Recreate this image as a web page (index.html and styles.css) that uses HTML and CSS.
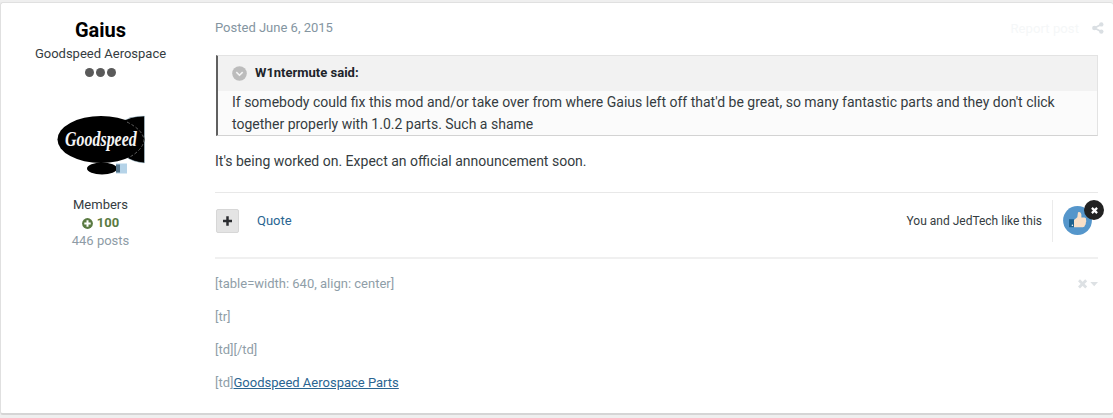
FILE: index.html
```html
<!DOCTYPE html>
<html lang="en">
<head>
<meta charset="utf-8">
<title>Forum post</title>
<link rel="stylesheet" href="styles.css">
</head>
<body>
<article class="post">
  <aside class="author">
    <h3 class="name">Gaius</h3>
    <div class="rank">Goodspeed Aerospace</div>
    <div class="pips"><i></i><i></i><i></i></div>
    <svg class="avatar" width="90" height="90" viewBox="0 0 90 90">
      <defs><filter id="soft" x="-10%" y="-10%" width="120%" height="120%"><feGaussianBlur stdDeviation=".6"/></filter></defs>
      <g filter="url(#soft)">
        <path d="M66 21Q74 15 88.500 15V62Q77 61 70 56Z" fill="#000" stroke="#b9d8e8" stroke-width=".5"/>
        <ellipse cx="45" cy="38.500" rx="43.500" ry="23.500" fill="#000"/>
        <path d="M71 21Q87 29 88 39Q87 49 72 57" fill="none" stroke="#777" stroke-width=".8" stroke-dasharray="3 2"/>
        <ellipse cx="46" cy="67.500" rx="15" ry="6" fill="#000"/>
        <rect x="60" y="62.500" width="11" height="10" fill="#b5d3e8"/>
        <rect x="60" y="63.500" width="4" height="8" fill="#56748a"/>
      </g>
      <text transform="translate(9 45) scale(.84 1.06)">Goodspeed</text>
    </svg>
    <div class="group">Members</div>
    <div class="rep"><svg width="11" height="11" viewBox="0 0 11 11"><circle cx="5.500" cy="5.500" r="5.400" fill="#5a7a42"/><path d="M5.500 2.300V8.700M2.300 5.500H8.700" stroke="#fff" stroke-width="2"/></svg><span>100</span></div>
    <div class="count">446 posts</div>
  </aside>
  <div class="content">
    <header class="meta">
      <span>Posted June 6, 2015</span>
      <span class="tools"><span class="report">Report post</span><svg width="12" height="12" viewBox="0 0 12 12"><path d="M9.500 2.300L2.500 6L9.500 9.700" fill="none" stroke="#dadfe3" stroke-width="1.700"/><g fill="#dadfe3"><circle cx="9.300" cy="2.400" r="2.200"/><circle cx="2.400" cy="6" r="2.300"/><circle cx="9.300" cy="9.600" r="2.200"/></g></svg></span>
    </header>
    <blockquote class="quote">
      <div class="cite"><svg width="15" height="15" viewBox="0 0 15 15"><circle cx="7.500" cy="7.500" r="7.300" fill="#bcbcbc"/><path d="M4.300 6.100L7.500 9.200L10.700 6.100" fill="none" stroke="#f4f4f4" stroke-width="1.600"/></svg><span>W1ntermute said:</span></div>
      <p class="quoted"><span>If somebody could fix this mod and/or take over from where Gaius left off that'd be great, so many fantastic parts and they don't click</span><br><span>together properly with 1.0.2 parts. Such a shame</span></p>
    </blockquote>
    <p class="message">It's being worked on. Expect an official announcement soon.</p>
    <div class="controls">
      <button class="multi" aria-label="Multiquote"><svg width="9" height="10" viewBox="0 0 9 10"><path d="M4.500 .3V9.700M0 5H9" stroke="#2b2d30" stroke-width="2.500"/></svg></button>
      <a class="reply">Quote</a>
      <span class="likes">You and JedTech like this</span>
      <div class="reaction">
        <svg width="29" height="29" viewBox="0 0 29 29"><circle cx="14.500" cy="14.500" r="14.400" fill="#5596cb"/><path d="M11 14L14.300 11.300L15 6.300Q18 5 18.400 8.500V11.500H21.500Q23.600 11.800 23 13.700Q23.700 15.400 22.800 16.700Q23 18.600 22 19.300Q21.700 21.300 19.800 21.300H11Z" fill="#fae0c8"/><rect x="6" y="13.200" width="5" height="8" fill="#1f628f"/><circle cx="9.400" cy="19.300" r=".8" fill="#fff"/></svg>
        <span class="remove"><svg width="7" height="7" viewBox="0 0 7 7"><path d="M.9 .9L6.100 6.100M6.100 .9L.9 6.100" stroke="#fff" stroke-width="2.200"/></svg></span>
      </div>
    </div>
    <footer class="signature">
      <div class="sig-text">
        <p>[table=width: 640, align: center]</p>
        <p>[tr]</p>
        <p>[td][/td]</p>
        <p>[td]<a>Goodspeed Aerospace Parts</a></p>
      </div>
      <svg class="sig-tools" width="21" height="10" viewBox="0 0 21 10"><path d="M2 1.200L9.200 8.400M9.200 1.200L2 8.400" stroke="#dde1e4" stroke-width="2.800"/><path d="M13.300 3H21L17.200 7.200Z" fill="#dde1e4"/></svg>
    </footer>
  </div>
</article>
</body>
</html>
```
FILE: styles.css
```css
* { box-sizing: border-box; }
body { margin: 0; padding-top: 2px; height: 418px; overflow: hidden; background: #efefef; font-family: Roboto, sans-serif; font-size: 13px; line-height: 18px; color: #353c41; }
h3, p, blockquote { margin: 0; }
svg { display: block; flex: none; }
.post { display: flex; width: 1113px; height: 413px; background: #fff; border: 1px solid #e0e0e0; border-bottom: 2px solid #d5d5d5; border-right: 0; border-radius: 3px; }
.author { width: 199px; padding-top: 15px; display: flex; flex-direction: column; align-items: center; }
.name { font-size: 20px; line-height: 24px; font-weight: 700; color: #000; }
.rank { margin-top: 3px; }
.pips { display: flex; gap: 2px; margin-top: 5px; }
.pips i { width: 9px; height: 9px; border-radius: 50%; background: #5a5a5a; }
.avatar { margin: 24px 0 0 0; }
.avatar text { font: italic bold 19px "Liberation Serif", serif; fill: #f4f4f4; }
.group { margin-top: 5px; }
.rep { display: flex; align-items: center; gap: 4px; font-weight: 700; color: #5a7a42; }
.count { color: #8e9ca6; }
.content { width: 883px; margin-left: 15px; display: flex; flex-direction: column; }
.meta { display: flex; justify-content: space-between; height: 52px; padding-top: 16px; color: #8495a1; }
.tools { display: flex; align-items: center; gap: 13px; height: 18px; margin-right: -6px; }
.report { position: relative; top: 1px; color: #f5f7f8; letter-spacing: .1px; }
.quote { height: 81px; margin-left: 1px; border: 1px solid #e3e3e3; border-bottom-color: #d3d3d3; border-left: 2px solid #606060; background: #fbfbfb; }
.cite { display: flex; align-items: center; gap: 8px; height: 35px; padding: 0 0 1px 14px; background: #f2f2f2; font-weight: 700; color: #20242a; }
.quoted { padding-left: 14px; font-size: 14px; line-height: 22px; white-space: nowrap; }
.message { height: 56px; padding-top: 14px; font-size: 14px; line-height: 22px; }
.controls { height: 65px; display: flex; align-items: center; border-top: 1px solid #e8e8e8; padding-bottom: 8px; }
.multi { width: 23px; height: 24px; margin-left: 1px; padding: 0 1px 0 0; display: flex; align-items: center; justify-content: center; background: #e4e4e4; border: 1px solid #d7d7d7; border-radius: 2px; }
.reply { margin-left: 18px; color: #2a6592; }
.likes { margin-left: auto; font-size: 12px; }
.reaction { position: relative; height: 42px; margin: 0 6px 0 10px; padding: 6px 0 0 10px; border-left: 1px solid #ebebeb; }
.remove { position: absolute; right: -12px; top: 0; width: 20px; height: 20px; border-radius: 50%; background: #222; display: flex; align-items: center; justify-content: center; }
.signature { display: flex; justify-content: space-between; border-top: 2px solid #f0f0f0; padding-top: 16px; color: #8f9ea8; }
.sig-text p { margin-bottom: 15px; }
.sig-text a { color: #2a6592; text-decoration: underline; }
.sig-tools { margin-top: 4px; }
```
